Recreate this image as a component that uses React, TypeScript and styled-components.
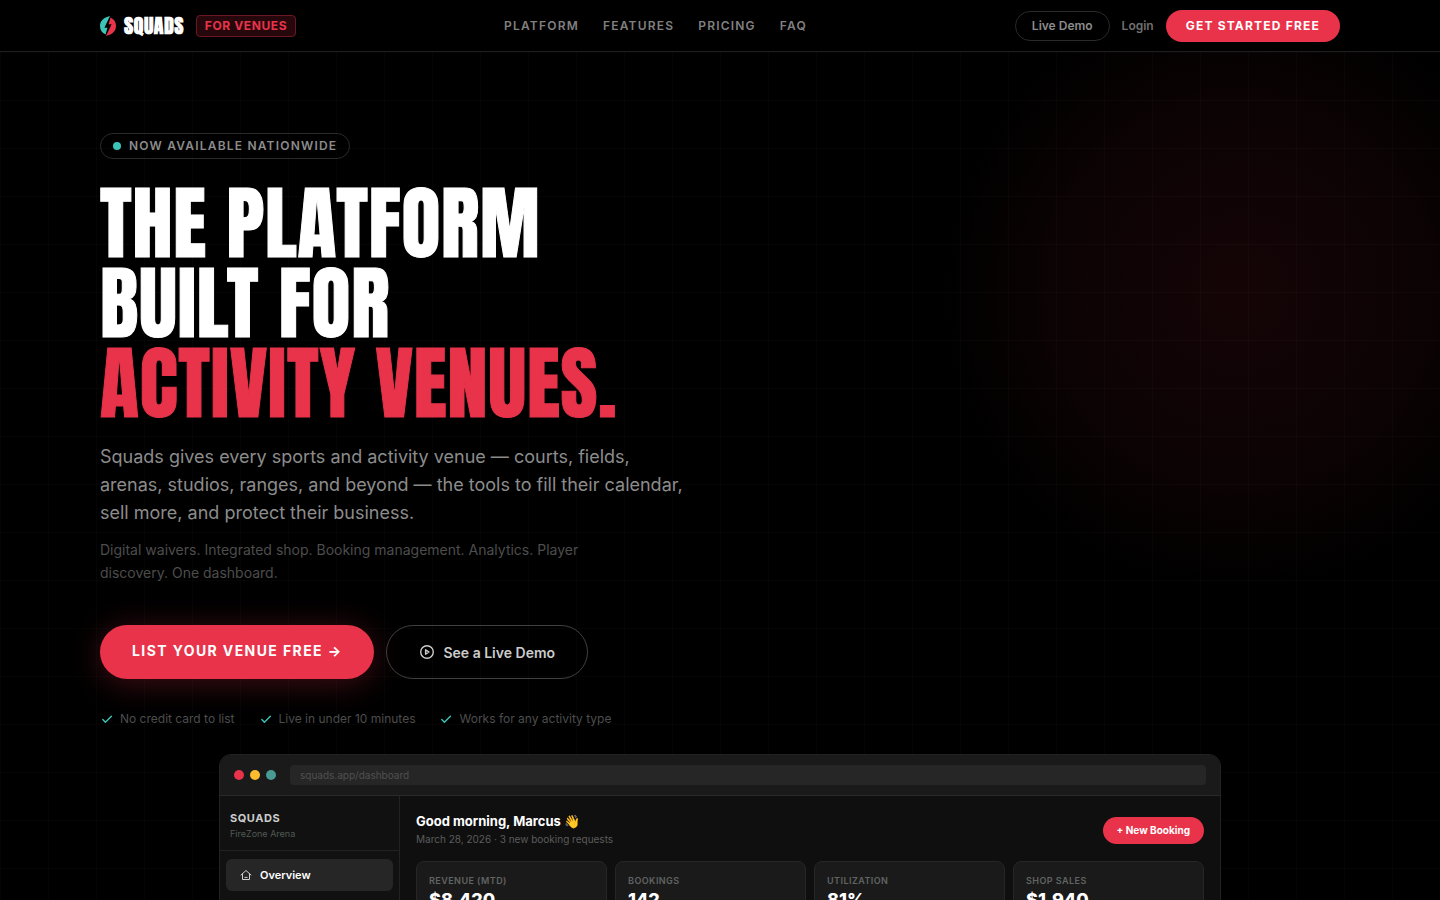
import React from "react";
import styled, { createGlobalStyle } from "styled-components";

const red = "#e8334a";
const teal = "#3bc4b8";

const Global = createGlobalStyle`
  *, *::before, *::after { box-sizing: border-box; }
  body {
    margin: 0;
    background: #000;
    color: #fff;
    font-family: Inter, "Liberation Sans", sans-serif;
  }
  a { color: inherit; text-decoration: none; }
  button { font-family: inherit; cursor: pointer; }
  h1, h2, p, ul, dl, dd { margin: 0; padding: 0; }
  ul { list-style: none; }
`;

const Page = styled.div`
  height: 100vh;
  display: flex;
  flex-direction: column;
  overflow: hidden;
`;

const Header = styled.header`
  flex: none;
  padding: 0 20px;
  background: #000;
  border-bottom: 1px solid #1e1e1e;
`;

const HeaderInner = styled.div`
  max-width: 1240px;
  height: 51px;
  margin: 0 auto;
  display: flex;
  align-items: center;
  justify-content: space-between;
`;

const Cluster = styled.div`
  display: flex;
  align-items: center;
  gap: 12px;
`;

const Brand = styled.a`
  display: flex;
  align-items: center;
  gap: 8px;
  font: 700 20px/30px Anton, Inter, sans-serif;
  letter-spacing: 0.02em;
`;

const VenueTag = styled.span`
  padding: 0 8px;
  border: 1px solid #6b1824;
  border-radius: 4px;
  background: #26080c;
  color: ${red};
  font-size: 12px;
  line-height: 20px;
  font-weight: 700;
  letter-spacing: 0.05em;
`;

const NavLinks = styled.nav`
  display: flex;
  gap: 24px;
  color: #808080;
  font-size: 12px;
  font-weight: 600;
  letter-spacing: 0.1em;
`;

const DemoLink = styled.a`
  padding: 0 16px;
  border: 1px solid #2a2a2a;
  border-radius: 15px;
  color: #8c8c8c;
  font-size: 12px;
  line-height: 28px;
  font-weight: 600;
`;

const LoginLink = styled.a`
  color: #707070;
  font-size: 12px;
  font-weight: 600;
`;

const Pill = styled.button<{ $size: "small" | "medium" | "large" }>`
  border: 0;
  border-radius: 27px;
  background: ${red};
  color: #fff;
  font-weight: 700;
  ${(p) =>
    p.$size === "small" &&
    "height: 27px; padding: 0 14px; font-size: 10px;"}
  ${(p) =>
    p.$size === "medium" &&
    "height: 32px; padding: 0 20px; font-size: 12px; letter-spacing: 0.1em;"}
  ${(p) =>
    p.$size === "large" &&
    "height: 54px; padding: 0 32px 3px; font-size: 14px; letter-spacing: 0.1em; box-shadow: 0 4px 32px rgba(232, 51, 74, 0.28);"}
`;

const Hero = styled.main`
  flex: 1;
  min-height: 0;
  overflow: hidden;
  padding: 81px 20px 0;
  background-image:
    linear-gradient(rgba(255, 255, 255, 0.02) 1px, transparent 1px),
    linear-gradient(90deg, rgba(255, 255, 255, 0.02) 1px, transparent 1px),
    radial-gradient(circle 300px at calc(100% - 200px) 240px, rgba(232, 51, 74, 0.09), rgba(232, 51, 74, 0.05) 60%, transparent);
  background-size: 48px 48px, 48px 48px, auto;
`;

const HeroInner = styled.div`
  max-width: 1240px;
  margin: 0 auto;
  display: flex;
  flex-direction: column;
  align-items: flex-start;
`;

const Announcement = styled.div`
  display: flex;
  align-items: center;
  gap: 8px;
  padding: 0 12px;
  border: 1px solid #2a2a2a;
  border-radius: 13px;
  color: #8c8c8c;
  font-size: 12px;
  line-height: 24px;
  font-weight: 600;
  letter-spacing: 0.1em;
`;

const Dot = styled.i<{ $color: string; $size: number }>`
  width: ${(p) => p.$size}px;
  height: ${(p) => p.$size}px;
  border-radius: 50%;
  background: ${(p) => p.$color};
`;

const Title = styled.h1`
  margin-top: 24px;
  font: 400 80px/80px Anton, Inter, sans-serif;
  letter-spacing: 0.01em;
  -webkit-text-stroke: 1px currentColor;
`;

const Accent = styled.span`
  color: ${red};
`;

const Lead = styled.p`
  max-width: 584px;
  margin-top: 20px;
  color: #8c8c8c;
  font-size: 18px;
  line-height: 28px;
`;

const Support = styled.p`
  max-width: 500px;
  margin-top: 11px;
  color: #4d4d4d;
  font-size: 14px;
  line-height: 23px;
`;

const Actions = styled.div`
  display: flex;
  gap: 12px;
  margin-top: 41px;
`;

const OutlineButton = styled.button`
  display: flex;
  align-items: center;
  gap: 8px;
  height: 54px;
  padding: 0 32px;
  border: 1px solid #404040;
  border-radius: 27px;
  background: transparent;
  color: #ccc;
  font-size: 14px;
  font-weight: 600;
`;

const Perks = styled.ul`
  display: flex;
  gap: 24px;
  margin-top: 32px;
  color: #4d4d4d;
  font-size: 12px;
  line-height: 16px;
`;

const Perk = styled.li`
  display: flex;
  align-items: center;
  gap: 6px;
`;

const Preview = styled.section`
  width: 100%;
  max-width: 1002px;
  margin: 27px auto 0;
  border: 1px solid #222;
  border-radius: 12px;
  background: #0f0f0f;
  overflow: hidden;
`;

const BrowserBar = styled.div`
  display: flex;
  align-items: center;
  gap: 14px;
  height: 41px;
  padding: 0 14px;
  border-bottom: 1px solid #2a2a2a;
  background: #1a1a1a;
`;

const Dots = styled.div`
  display: flex;
  gap: 6px;
`;

const Address = styled.div`
  flex: 1;
  padding: 0 10px;
  border-radius: 4px;
  background: #262626;
  color: #505050;
  font-size: 10px;
  line-height: 20px;
`;

const Workspace = styled.div`
  display: grid;
  grid-template-columns: 180px 1fr;
`;

const Sidebar = styled.aside`
  min-height: 420px;
  border-right: 1px solid #222;
  background: #111;
`;

const Account = styled.div`
  padding: 14px 10px 8px;
  border-bottom: 1px solid #222;
  color: #505a56;
  font-size: 9px;
  line-height: 16px;
`;

const AccountName = styled.strong`
  display: block;
  color: #ccc;
  font-size: 11px;
  font-weight: 700;
  letter-spacing: 0.05em;
`;

const SideLink = styled.a`
  display: flex;
  align-items: center;
  gap: 8px;
  height: 32px;
  margin: 8px 6px 0;
  padding: 0 14px;
  border-radius: 6px;
  background: #262626;
  font-size: 11px;
  font-weight: 600;
`;

const Content = styled.div`
  padding: 16px;
`;

const Greeting = styled.div`
  display: flex;
  align-items: center;
  justify-content: space-between;
`;

const GreetingTitle = styled.h2`
  font: 700 13px/18px Inter, sans-serif;
`;

const GreetingNote = styled.p`
  color: #5c5c5c;
  font-size: 10px;
  line-height: 18px;
`;

const Stats = styled.dl`
  display: grid;
  grid-template-columns: repeat(4, 1fr);
  gap: 8px;
  margin-top: 13px;
`;

const Stat = styled.div`
  height: 80px;
  padding: 12px;
  border: 1px solid #262626;
  border-radius: 8px;
  background: #1a1a1a;
`;

const StatLabel = styled.dt`
  color: #606462;
  font-size: 9px;
  line-height: 14px;
  font-weight: 600;
  letter-spacing: 0.05em;
`;

const StatValue = styled.dd`
  font-size: 18px;
  line-height: 24px;
  font-weight: 800;
`;

const LogoMark = () => (
  <svg width="16" height="20" viewBox="0 0 16 20" aria-hidden="true">
    <path d="M10 0 C3.5 1.5 0 5 0 10 C0 14 2 17 5.5 18.5 L7.5 11.8 H4.4 Z" fill={teal} />
    <path d="M6 20 C12.5 18.5 16 15 16 10 C16 6 14 3 10.5 1.5 L8.5 8.2 H11.6 Z" fill={red} />
  </svg>
);

const CheckIcon = () => (
  <svg width="14" height="14" viewBox="0 0 14 14" fill="none" stroke={teal} strokeWidth="1.4" strokeLinecap="round" strokeLinejoin="round" aria-hidden="true">
    <path d="M2.8 7.6 L5.4 10.2 L11.4 4.2" />
  </svg>
);

const PlayIcon = () => (
  <svg width="16" height="16" viewBox="0 0 16 16" fill="none" stroke="currentColor" strokeWidth="1.4" strokeLinejoin="round" aria-hidden="true">
    <circle cx="8" cy="8" r="6.3" />
    <path d="M6.6 5.8 L10 8 L6.6 10.2 Z" />
  </svg>
);

const HomeIcon = () => (
  <svg width="12" height="12" viewBox="0 0 12 12" fill="none" stroke="#d0d0d0" strokeLinecap="round" strokeLinejoin="round" aria-hidden="true">
    <path d="M1 6 L6 1.5 L11 6 M2.5 5 V10.5 H9.5 V5 M4.8 8.4 H7.2" />
  </svg>
);

const perks = ["No credit card to list", "Live in under 10 minutes", "Works for any activity type"];
const stats = [
  ["REVENUE (MTD)", "$8,420"],
  ["BOOKINGS", "142"],
  ["UTILIZATION", "81%"],
  ["SHOP SALES", "$1,940"],
];

export default function App() {
  return (
    <Page>
      <Global />
      <Header>
        <HeaderInner>
          <Cluster>
            <Brand href="#">
              <LogoMark />
              SQUADS
            </Brand>
            <VenueTag>FOR VENUES</VenueTag>
          </Cluster>
          <NavLinks>
            <a href="#platform">PLATFORM</a>
            <a href="#features">FEATURES</a>
            <a href="#pricing">PRICING</a>
            <a href="#faq">FAQ</a>
          </NavLinks>
          <Cluster>
            <DemoLink href="#demo">Live Demo</DemoLink>
            <LoginLink href="#login">Login</LoginLink>
            <Pill $size="medium">GET STARTED FREE</Pill>
          </Cluster>
        </HeaderInner>
      </Header>
      <Hero>
        <HeroInner>
          <Announcement>
            <Dot $color={teal} $size={8} />
            NOW AVAILABLE NATIONWIDE
          </Announcement>
          <Title>
            THE PLATFORM
            <br />
            BUILT FOR
            <br />
            <Accent>ACTIVITY VENUES.</Accent>
          </Title>
          <Lead>
            Squads gives every sports and activity venue — courts, fields, arenas, studios, ranges, and beyond — the
            tools to fill their calendar, sell more, and protect their business.
          </Lead>
          <Support>
            Digital waivers. Integrated shop. Booking management. Analytics. Player discovery. One dashboard.
          </Support>
          <Actions>
            <Pill $size="large">LIST YOUR VENUE FREE →</Pill>
            <OutlineButton>
              <PlayIcon />
              See a Live Demo
            </OutlineButton>
          </Actions>
          <Perks>
            {perks.map((perk) => (
              <Perk key={perk}>
                <CheckIcon />
                {perk}
              </Perk>
            ))}
          </Perks>
        </HeroInner>
        <Preview>
          <BrowserBar>
            <Dots>
              <Dot $color={red} $size={10} />
              <Dot $color="#fdbc2e" $size={10} />
              <Dot $color="#4a9a94" $size={10} />
            </Dots>
            <Address>squads.app/dashboard</Address>
          </BrowserBar>
          <Workspace>
            <Sidebar>
              <Account>
                <AccountName>SQUADS</AccountName>
                FireZone Arena
              </Account>
              <SideLink href="#overview">
                <HomeIcon />
                Overview
              </SideLink>
            </Sidebar>
            <Content>
              <Greeting>
                <div>
                  <GreetingTitle>Good morning, Marcus 👋</GreetingTitle>
                  <GreetingNote>March 28, 2026 · 3 new booking requests</GreetingNote>
                </div>
                <Pill $size="small">+ New Booking</Pill>
              </Greeting>
              <Stats>
                {stats.map(([label, value]) => (
                  <Stat key={label}>
                    <StatLabel>{label}</StatLabel>
                    <StatValue>{value}</StatValue>
                  </Stat>
                ))}
              </Stats>
            </Content>
          </Workspace>
        </Preview>
      </Hero>
    </Page>
  );
}
